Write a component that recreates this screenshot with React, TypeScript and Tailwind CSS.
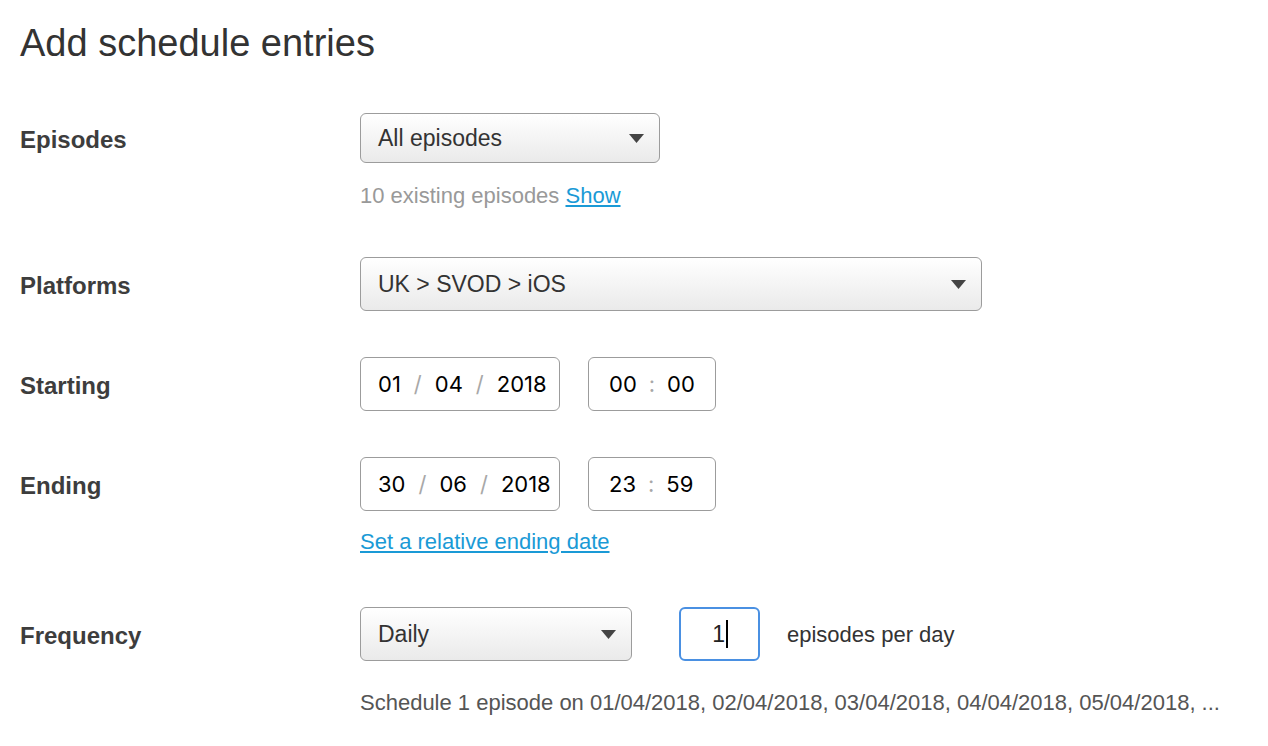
import type { ReactNode } from "react";

const sans = "font-['Liberation_Sans',Arial,sans-serif]";
const sys = "font-['Inter','Noto_Sans',sans-serif]";

function Caret() {
  return (
    <svg width="15" height="9" viewBox="0 0 15 9" className="shrink-0">
      <path d="M0 0 H15 L7.5 9 Z" fill="#444" />
    </svg>
  );
}

function FakeSelect({
  value,
  width,
  height = "h-[54px]",
}: {
  value: string;
  width: string;
  height?: string;
}) {
  return (
    <div
      className={`${width} ${height} flex items-center justify-between rounded-[6px] border border-[#9c9c9c] bg-linear-to-b from-white to-[#eaeaea] pl-[17px] pr-[15px] text-[23px] text-[#333]`}
    >
      <span>{value}</span>
      <Caret />
    </div>
  );
}

function Sep({ children }: { children: ReactNode }) {
  return <span className="text-[#a8a8a8]">{children}</span>;
}

function DateBox({ d, m, y }: { d: string; m: string; y: string }) {
  return (
    <div
      className={`${sys} flex h-[54px] w-[200px] items-center rounded-[6px] border border-[#9c9c9c] bg-white pl-[17px] text-[22px] text-black`}
    >
      <span>{d}</span>
      <span className="mx-[13px]">
        <Sep>/</Sep>
      </span>
      <span>{m}</span>
      <span className="mx-[13px]">
        <Sep>/</Sep>
      </span>
      <span>{y}</span>
    </div>
  );
}

function TimeBox({ h, m }: { h: string; m: string }) {
  return (
    <div
      className={`${sys} flex h-[54px] w-[128px] items-center rounded-[6px] border border-[#9c9c9c] bg-white pl-[20px] text-[22px] text-black`}
    >
      <span>{h}</span>
      <span className="mx-[12px]">
        <Sep>:</Sep>
      </span>
      <span>{m}</span>
    </div>
  );
}

function Row({
  label,
  labelHeight = "h-[54px]",
  children,
  className = "",
}: {
  label: string;
  labelHeight?: string;
  children: ReactNode;
  className?: string;
}) {
  return (
    <div className={`flex ${className}`}>
      <div
        className={`${labelHeight} flex w-[340px] shrink-0 items-center pt-[3px] text-[24px] font-bold text-[#3d3d3d]`}
      >
        {label}
      </div>
      <div>{children}</div>
    </div>
  );
}

export default function App() {
  return (
    <div className={`${sans} min-h-screen bg-white px-5 pt-[20px]`}>
      <h1 className="text-[38px] leading-[46px] text-[#333]">Add schedule entries</h1>

      <Row label="Episodes" labelHeight="h-[50px]" className="mt-[47px]">
        <FakeSelect value="All episodes" width="w-[300px]" height="h-[50px]" />
        <p className="mt-[20px] text-[22px] leading-[26px] text-[#999]">
          10 existing episodes{" "}
          <a className="text-[#1a9ad6] underline underline-offset-2">Show</a>
        </p>
      </Row>

      <Row label="Platforms" className="mt-[48px]">
        <FakeSelect value="UK > SVOD > iOS" width="w-[622px]" />
      </Row>

      <Row label="Starting" className="mt-[46px]">
        <div className="flex gap-[28px]">
          <DateBox d="01" m="04" y="2018" />
          <TimeBox h="00" m="00" />
        </div>
      </Row>

      <Row label="Ending" className="mt-[46px]">
        <div className="flex gap-[28px]">
          <DateBox d="30" m="06" y="2018" />
          <TimeBox h="23" m="59" />
        </div>
        <p className="mt-[18px] text-[22px] leading-[26px]">
          <a className="text-[#1a9ad6] underline underline-offset-2">
            Set a relative ending date
          </a>
        </p>
      </Row>

      <Row label="Frequency" className="mt-[52px]">
        <div className="flex items-center">
          <FakeSelect value="Daily" width="w-[272px]" />
          <div className="ml-[47px] flex h-[54px] w-[81px] items-center justify-end rounded-[6px] border-2 border-[#4a90e2] bg-white pr-[30px] text-[23px] text-[#222]">
            <span>1</span>
            <span className="ml-[1px] h-[28px] w-[2px] bg-black" />
          </div>
          <span className="ml-[27px] text-[22px] text-[#333]">episodes per day</span>
        </div>
        <p className="mt-[29px] whitespace-nowrap text-[22px] leading-[26px] text-[#555]">
          Schedule 1 episode on 01/04/2018, 02/04/2018, 03/04/2018, 04/04/2018, 05/04/2018, ...
        </p>
      </Row>
    </div>
  );
}
